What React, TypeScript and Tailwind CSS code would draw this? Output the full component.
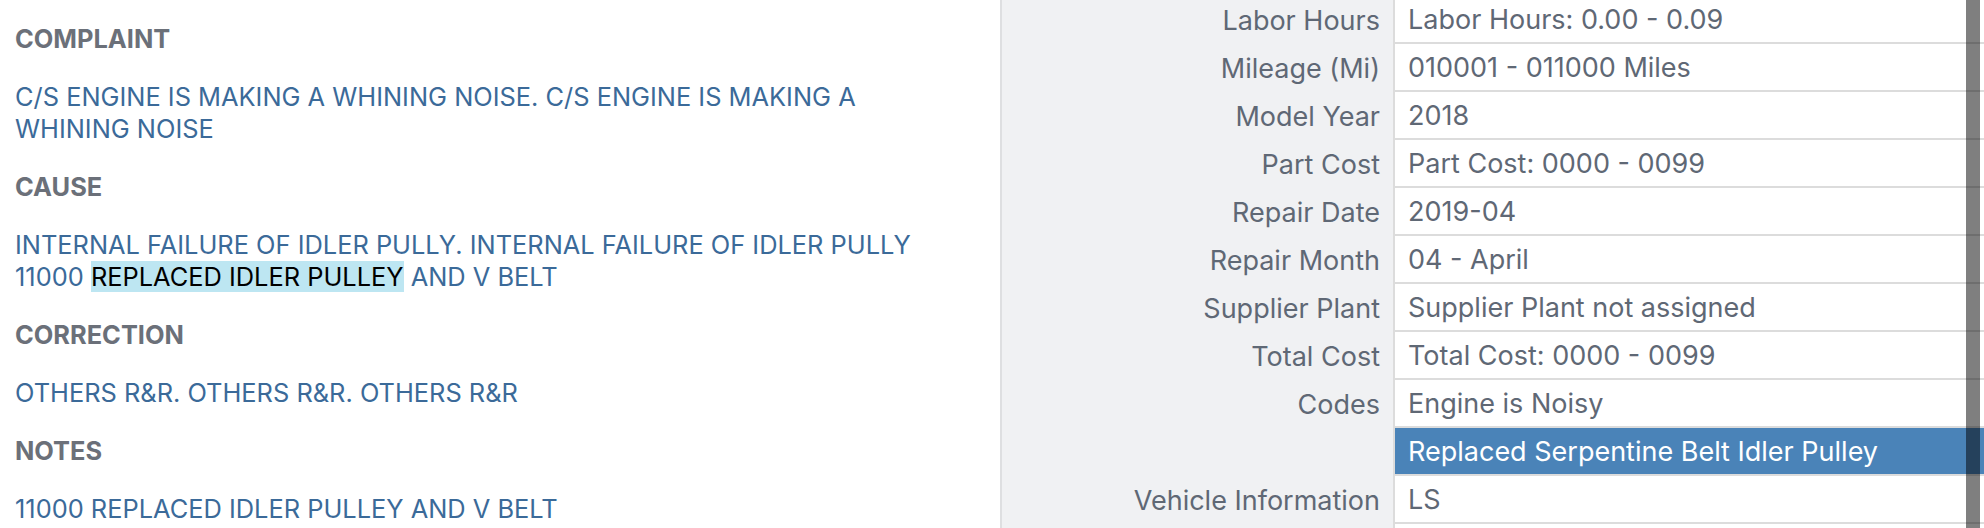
import React from 'react';

type Row = { label: string; values: string[]; selected?: number };

const sections = [
  { title: 'COMPLAINT', body: 'C/S ENGINE IS MAKING A WHINING NOISE. C/S ENGINE IS MAKING A WHINING NOISE' },
  { title: 'CAUSE', body: 'cause' },
  { title: 'CORRECTION', body: 'OTHERS R&R. OTHERS R&R. OTHERS R&R' },
  { title: 'NOTES', body: '11000 REPLACED IDLER PULLEY AND V BELT' },
];

const rows: Row[] = [
  { label: 'Labor Hours', values: ['Labor Hours: 0.00 - 0.09'] },
  { label: 'Mileage (Mi)', values: ['010001 - 011000 Miles'] },
  { label: 'Model Year', values: ['2018'] },
  { label: 'Part Cost', values: ['Part Cost: 0000 - 0099'] },
  { label: 'Repair Date', values: ['2019-04'] },
  { label: 'Repair Month', values: ['04 - April'] },
  { label: 'Supplier Plant', values: ['Supplier Plant not assigned'] },
  { label: 'Total Cost', values: ['Total Cost: 0000 - 0099'] },
  { label: 'Codes', values: ['Engine is Noisy', 'Replaced Serpentine Belt Idler Pulley'], selected: 1 },
  { label: 'Vehicle Information', values: ['LS'] },
  { label: '', values: [''] },
];

function Body({ text }: { text: string }) {
  if (text !== 'cause') return <>{text}</>;
  // search hit is highlighted inside the cause text
  return (
    <>
      INTERNAL FAILURE OF IDLER PULLY. INTERNAL FAILURE OF IDLER PULLY 11000{' '}
      <mark className="bg-[#bde6f2] text-black">REPLACED IDLER PULLEY</mark> AND V BELT
    </>
  );
}

export default function App() {
  return (
    <div
      className="flex h-[528px] w-[1984px] overflow-hidden bg-white"
      style={{ fontFamily: 'Inter, "Noto Sans", sans-serif' }}
    >
      {/* narrative */}
      <div className="w-[1000px] shrink-0 pl-[15px] pr-[55px] pt-[23px] text-[25.4px] leading-[32px]">
        {sections.map((s) => (
          <div key={s.title}>
            <h3 className="mb-[26px] font-bold text-[#6b7079]">{s.title}</h3>
            <p className="mb-[26px] text-[#3b6a99]">
              <Body text={s.body} />
            </p>
          </div>
        ))}
      </div>

      {/* details table */}
      <div className="relative flex-1 border-l-2 border-[#dedfe1] text-[27px] text-[#5f6875]">
        <div className="-mt-[4px]">
          {rows.map((r, i) => (
            <div key={i} className="flex">
              <div className="w-[393px] shrink-0 border-r-2 border-[#dcdcdc] bg-[#f0f1f3]">
                {r.values.map((_, j) => (
                  <div key={j} className="flex h-[48px] items-center justify-end pr-[13px] pt-[3px]">
                    {j === 0 ? r.label : ''}
                  </div>
                ))}
              </div>
              <div className="flex-1">
                {r.values.map((v, j) => (
                  <div
                    key={j}
                    className={
                      j === r.selected
                        ? 'flex h-[48px] items-center border-b-2 border-[#dcdcdc] bg-[#4a83b8] pl-[13px] pt-[3px] text-white'
                        : 'flex h-[48px] items-center border-b-2 border-[#dcdcdc] pl-[13px] pt-[3px]'
                    }
                  >
                    {v}
                  </div>
                ))}
              </div>
            </div>
          ))}
        </div>
        {/* overlay scrollbar */}
        <div className="absolute right-[4px] top-0 h-full w-[14px] bg-black/50" />
      </div>
    </div>
  );
}
